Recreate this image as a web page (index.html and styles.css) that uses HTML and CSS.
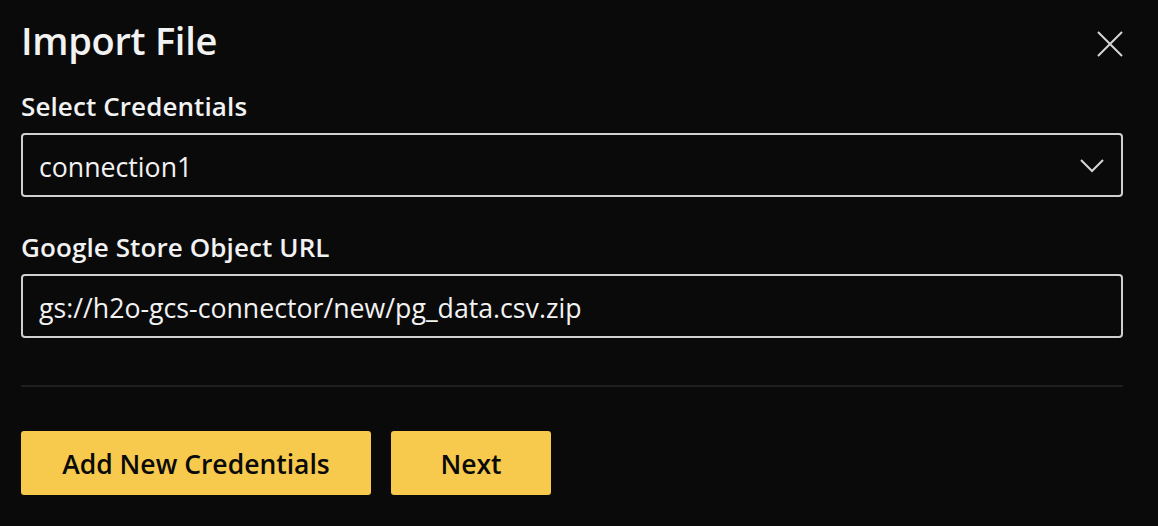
FILE: index.html
```html
<!DOCTYPE html>
<html lang="en">
<head>
<meta charset="utf-8">
<title>Import File</title>
<link rel="stylesheet" href="styles.css">
</head>
<body>
<div class="dialog">
  <div class="header">
    <h1 class="title">Import File</h1>
    <button class="close" aria-label="Close">
      <svg width="26" height="26" viewBox="0 0 26 26"><path d="M1 1L25 25M25 1L1 25" stroke="#d6d6d6" stroke-width="2" fill="none"/></svg>
    </button>
  </div>
  <div class="field">
    <div class="label">Select Credentials</div>
    <div class="box select">
      <span class="value">connection1</span>
      <svg class="chev" width="24" height="14" viewBox="0 0 24 14"><path d="M1 1L12 12L23 1" stroke="#d6d6d6" stroke-width="2" fill="none"/></svg>
    </div>
  </div>
  <div class="field second">
    <div class="label">Google Store Object URL</div>
    <div class="box">
      <span class="value">gs://h2o-gcs-connector/new/pg_data.csv.zip</span>
    </div>
  </div>
  <div class="divider"></div>
  <div class="actions">
    <button class="btn wide">Add New Credentials</button>
    <button class="btn narrow">Next</button>
  </div>
</div>
</body>
</html>
```
FILE: styles.css
```css
html, body {
  margin: 0;
  background: #0a0a0a;
  color: #f2f2f2;
  font-family: "Open Sans", "Noto Sans", sans-serif;
}
.dialog {
  padding: 16px 35px 0 21px;
}
.header {
  display: flex;
  justify-content: space-between;
  align-items: flex-start;
  height: 48px;
}
.title {
  margin: 0;
  font-size: 38px;
  line-height: 48px;
  font-weight: 600;
  letter-spacing: -0.3px;
}
.close {
  background: none;
  border: 0;
  padding: 0;
  margin-top: 15px;
  width: 26px;
  height: 26px;
  display: flex;
}
.field {
  margin-top: 24px;
}
.field.second {
  margin-top: 32px;
}
.label {
  font-size: 26px;
  line-height: 36px;
  font-weight: 600;
  margin-bottom: 9px;
  letter-spacing: 0.1px;
}
.box {
  box-sizing: border-box;
  height: 64px;
  border: 2px solid #d0d0d0;
  border-radius: 4px;
  padding: 2px 16px 0 16px;
  display: flex;
  align-items: center;
  justify-content: space-between;
  font-size: 26.7px;
}
.chev {
  margin-right: 1px;
}
.divider {
  height: 2px;
  background: #1f1f1f;
  margin-top: 47px;
}
.actions {
  display: flex;
  gap: 20px;
  margin-top: 44px;
}
.btn {
  height: 64px;
  border: 0;
  border-radius: 3px;
  background: #f7c94c;
  color: #0a0a0a;
  font-family: "Open Sans", "Noto Sans", sans-serif;
  font-size: 26.5px;
  font-weight: 600;
  letter-spacing: 0;
  padding: 2px 0 0;
}
.btn.wide {
  width: 350px;
}
.btn.narrow {
  width: 160px;
}
```
